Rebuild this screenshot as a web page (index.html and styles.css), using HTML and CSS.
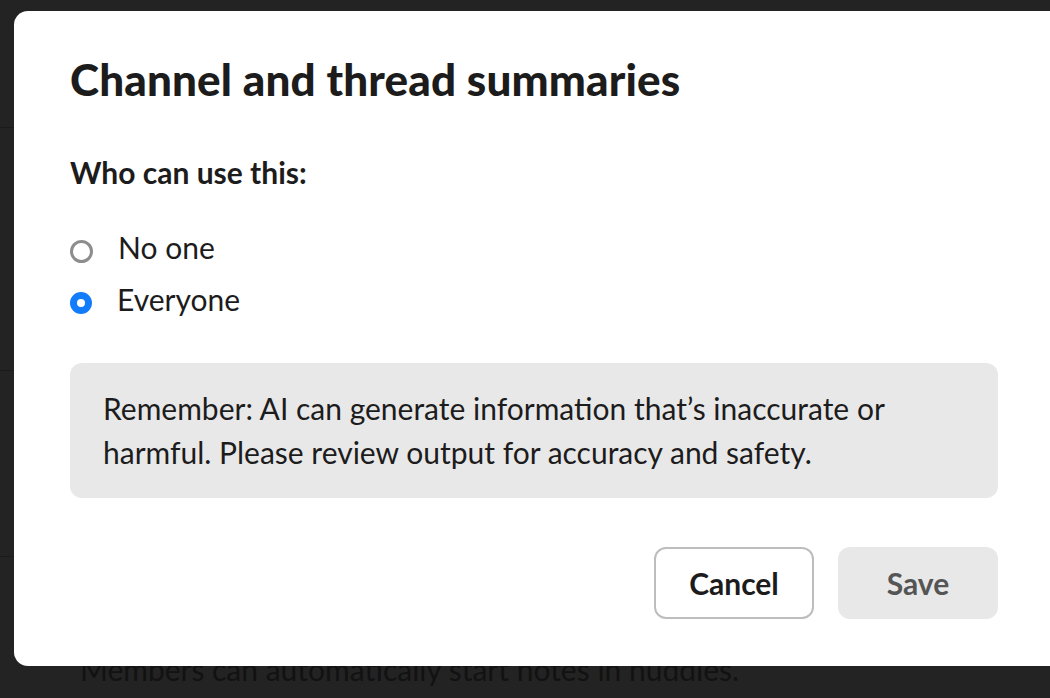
FILE: index.html
```html
<!DOCTYPE html>
<html lang="en">
<head>
    <meta charset="UTF-8">
    <meta name="viewport" content="width=device-width, initial-scale=1.0">
    <title>Channel and thread summaries</title>
    <link rel="stylesheet" href="styles.css">
</head>
<body>

<div class="page">
    <div class="row row-first"></div>
    <div class="row row-mid"></div>
    <div class="row row-last">
        <p class="row-text">Members can automatically start notes in huddles.</p>
    </div>
</div>

<div class="modal">
    <h1 class="modal-title">Channel and thread summaries</h1>

    <div class="field">
        <h3 class="field-label">Who can use this:</h3>
        <label class="radio">
            <input type="radio" name="who" value="none">
            <span class="radio-dot"></span>
            No one
        </label>
        <label class="radio">
            <input type="radio" name="who" value="everyone" checked>
            <span class="radio-dot"></span>
            Everyone
        </label>
    </div>

    <div class="notice">
        Remember: AI can generate information that’s inaccurate or harmful. Please review output for accuracy and safety.
    </div>

    <div class="actions">
        <button class="btn btn-cancel">Cancel</button>
        <button class="btn btn-save" disabled>Save</button>
    </div>
</div>

</body>
</html>
```

FILE: styles.css
```css
body {
    font-family: Lato, "Noto Sans", sans-serif;
    background-color: #232323;
    margin: 0;
    padding: 0;
    height: 698px;
    overflow: hidden;
    color: #1d1c1d;
}

/* page behind the dimmed overlay */
.page {
    padding-top: 127px;
}
.row {
    border-top: 1px solid #1b1b1b;
}
.row-first {
    height: 242px;
}
.row-mid {
    height: 185px;
}
.row-text {
    margin: 0;
    padding: 94px 0 0 80px;
    font-size: 30px;
    color: #121212;
}

/* modal */
.modal {
    position: absolute;
    left: 14px;
    top: 11px;
    width: 1050px;
    height: 655px;
    box-sizing: border-box;
    background-color: #fff;
    border-radius: 14px;
    padding: 42px 66px 0 56px;
}
.modal-title {
    margin: 0;
    font-size: 44px;
    line-height: 53px;
    font-weight: 900;
    letter-spacing: 0.15px;
}
.field {
    margin-top: 44px;
}
.field-label {
    margin: 0 0 27px;
    font-size: 30px;
    line-height: 44px;
    font-weight: 700;
}
.radio {
    display: flex;
    align-items: center;
    gap: 25px;
    height: 52px;
    font-size: 30px;
}
.radio input {
    display: none;
}
.radio-dot {
    width: 17px;
    height: 17px;
    margin-top: 8px;
    border: 3px solid #8d8d8d;
    border-radius: 50%;
    box-sizing: content-box;
}
.radio input:checked + .radio-dot {
    width: 8px;
    height: 8px;
    border: 7.5px solid #127cfb;
    background-color: #fff;
}
.notice {
    margin-top: 38px;
    background-color: #e8e8e8;
    border-radius: 12px;
    padding: 23px 33px 24px;
    font-size: 30px;
    line-height: 44px;
}
.actions {
    display: flex;
    justify-content: flex-end;
    gap: 24px;
    margin-top: 49px;
}
.btn {
    font-family: Lato, "Noto Sans", sans-serif;
    width: 160px;
    height: 72px;
    border-radius: 12px;
    font-size: 30px;
    font-weight: 700;
    cursor: pointer;
}
.btn-cancel {
    background-color: #fff;
    border: 2px solid #bdbdbd;
    color: #1d1c1d;
}
.btn-save {
    background-color: #e8e8e8;
    border: none;
    color: #555;
}
```
